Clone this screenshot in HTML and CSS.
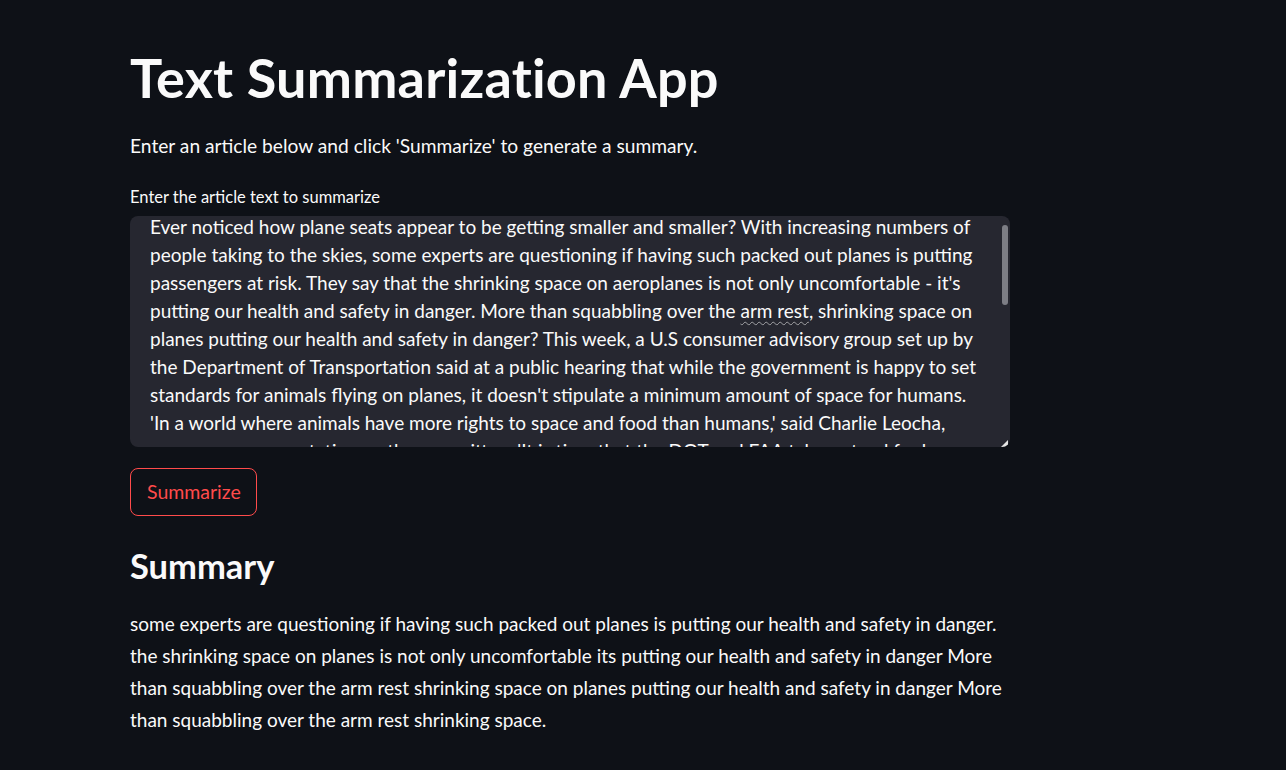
FILE: index.html
```html
<!DOCTYPE html>
<html lang="en">
<head>
<meta charset="utf-8">
<title>Text Summarization App</title>
<link rel="stylesheet" href="styles.css">
</head>
<body>
<main class="main">
  <h1 class="title">Text Summarization App</h1>
  <p class="intro">Enter an article below and click 'Summarize' to generate a summary.</p>
  <label class="label">Enter the article text to summarize</label>
  <div class="textarea" role="textbox" aria-multiline="true">
    <div class="textarea-content">
      <div class="tl">Ever noticed how plane seats appear to be getting smaller and smaller? With increasing numbers of</div>
      <div class="tl">people taking to the skies, some experts are questioning if having such packed out planes is putting</div>
      <div class="tl">passengers at risk. They say that the shrinking space on aeroplanes is not only uncomfortable - it's</div>
      <div class="tl">putting our health and safety in danger. More than squabbling over the <span class="spell">arm rest</span>, shrinking space on</div>
      <div class="tl">planes putting our health and safety in danger? This week, a U.S consumer advisory group set up by</div>
      <div class="tl">the Department of Transportation said at a public hearing that while the government is happy to set</div>
      <div class="tl">standards for animals flying on planes, it doesn't stipulate a minimum amount of space for humans.</div>
      <div class="tl">'In a world where animals have more rights to space and food than humans,' said Charlie Leocha,</div>
      <div class="tl">consumer representative on the committee. 'It is time that the DOT and FAA take a stand for humane</div>
    </div>
    <div class="scrollbar"></div>
    <div class="resize"></div>
  </div>
  <button class="btn" type="button">Summarize</button>
  <h3 class="subtitle">Summary</h3>
  <p class="summary">some experts are questioning if having such packed out planes is putting our health and safety in danger.<br>the shrinking space on planes is not only uncomfortable its putting our health and safety in danger More<br>than squabbling over the arm rest shrinking space on planes putting our health and safety in danger More<br>than squabbling over the arm rest shrinking space.</p>
</main>
</body>
</html>
```

FILE: styles.css
```css
html, body {
  margin: 0;
  padding: 0;
  background: #0e1117;
  color: #fafafa;
  font-family: Lato, "Noto Sans", sans-serif;
}

.main {
  width: 880px;
  padding: 46px 0 0 130px;
  display: flex;
  flex-direction: column;
  align-items: flex-start;
}

.title {
  margin: 0;
  font-size: 54px;
  line-height: 1.2;
  font-weight: 700;
  letter-spacing: 0.2px;
  white-space: nowrap;
}

.intro {
  margin: 20px 0 0;
  font-size: 19.2px;
  line-height: 1.6;
  white-space: nowrap;
}

.label {
  margin-top: 23px;
  font-size: 16.5px;
  line-height: 24px;
}

.textarea {
  position: relative;
  margin-top: 7px;
  width: 880px;
  height: 231px;
  box-sizing: border-box;
  background: #262730;
  border-radius: 8px;
  overflow: hidden;
}

.textarea-content {
  margin-top: -3px;
  padding-left: 20px;
  font-size: 19px;
  line-height: 28px;
}

.tl {
  white-space: nowrap;
}

.spell {
  text-decoration: underline wavy rgba(250, 250, 250, 0.55);
  text-decoration-thickness: 1px;
  text-underline-offset: 3px;
}

.scrollbar {
  position: absolute;
  right: 2px;
  top: 9px;
  width: 6px;
  height: 80px;
  border-radius: 3px;
  background: #7d7e85;
}

.resize {
  position: absolute;
  right: 2px;
  bottom: 0;
  width: 0;
  height: 0;
  border-style: solid;
  border-width: 0 0 7px 7px;
  border-color: transparent transparent #e6e6e6 transparent;
}

.btn {
  margin-top: 21px;
  height: 48px;
  padding: 0 15px 0 16px;
  background: transparent;
  border: 1px solid #ff4b4b;
  border-radius: 8px;
  color: #ff4b4b;
  font-family: Lato, "Noto Sans", sans-serif;
  font-size: 19.5px;
}

.subtitle {
  margin: 29px 0 0;
  font-size: 34.5px;
  line-height: 1.2;
  font-weight: 700;
}

.summary {
  margin: 22px 0 0;
  font-size: 19px;
  line-height: 32px;
  white-space: nowrap;
}
```
